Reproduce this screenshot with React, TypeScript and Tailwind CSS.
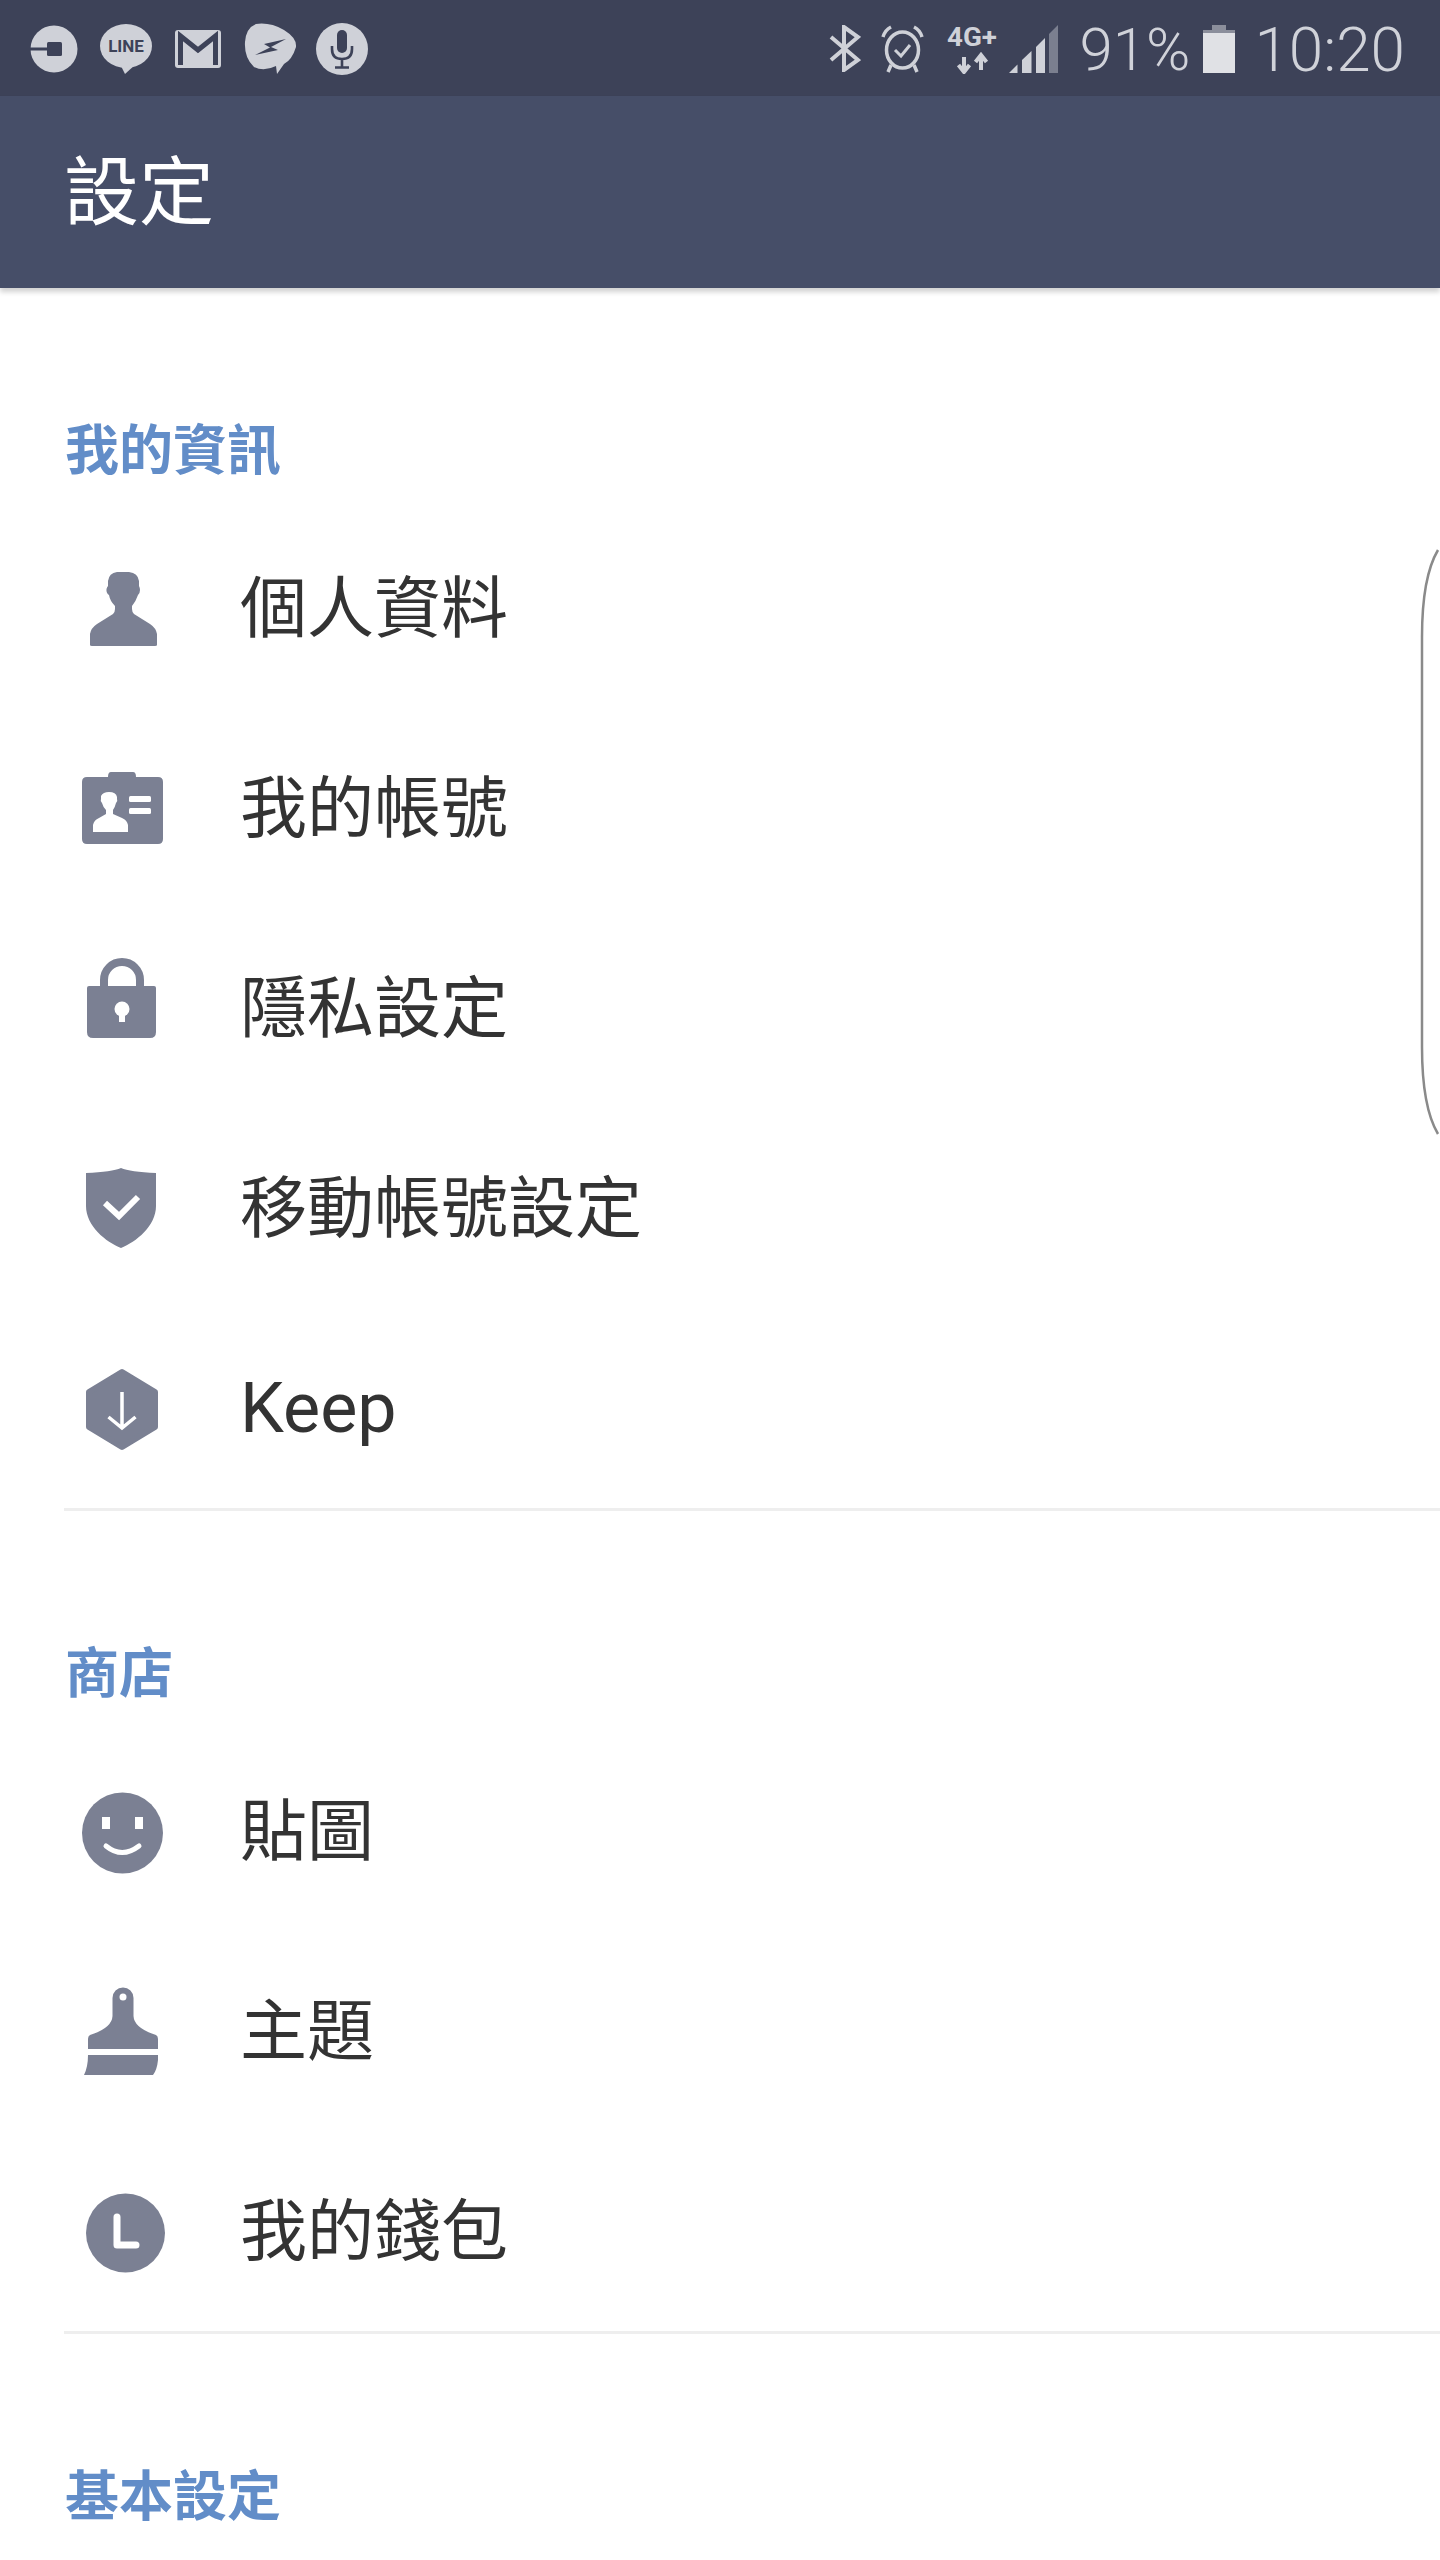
import type { ReactNode } from 'react';

const ICON = '#7b8093';
const LIGHT = '#cfd1d8';
const DARK = '#3d4258';

function RowIcon({ children }: { children: ReactNode }) {
  return (
    <svg width="120" height="120" viewBox="0 0 120 120" fill={ICON} className="shrink-0">
      {children}
    </svg>
  );
}

const PersonIcon = () => (
  <RowIcon>
    <path d="M26 95 V86 Q27 80 33 76 L49 66 Q51 64 51 61 V58 Q46 53 45 47 Q42 45 42.5 41 Q43 39 44 38 V33 Q45 25 53 24 H65 Q74 25 75 33 V38 Q76 40 76 42 Q76 45 74 47 Q72 53 68 58 V61 Q68 64 70 66 L86 76 Q92 80 93 86 V97 Q93 98 91 98 H28 Q26 98 26 97 Z" />
  </RowIcon>
);

const CardIcon = () => (
  <RowIcon>
    <path d="M47 24 H69 Q72 24 72 29 H94 Q99 29 99 34 V91 Q99 96 94 96 H23 Q18 96 18 91 V34 Q18 29 23 29 H44 Q44 24 47 24 Z" />
    <path
      fill="#fff"
      d="M29 84 V77 Q30 72 35 70 L42 66 V62 Q39 59 38 55 Q36 53 37 51 V48 Q39 44 45 44 Q52 44 53 49 V51 Q54 53 52 55 Q51 59 49 62 V66 L58 70 Q63 72 64 77 V84 Z"
    />
    <rect x="65" y="48" width="22" height="6" rx="1.5" fill="#fff" />
    <rect x="65" y="60" width="22" height="6" rx="1.5" fill="#fff" />
  </RowIcon>
);

const LockIcon = () => (
  <RowIcon>
    <path d="M40 41 V32 A18 18 0 0 1 76 32 V41" fill="none" stroke={ICON} strokeWidth="8" />
    <path d="M23 40 Q23 38 25 38 H90 Q92 38 92 40 V84 Q92 90 86 90 H29 Q23 90 23 84 Z" />
    <circle cx="58" cy="61" r="7.5" fill="#fff" />
    <rect x="55" y="63" width="6" height="11" fill="#fff" />
  </RowIcon>
);

const ShieldIcon = () => (
  <RowIcon>
    <path d="M57 20 Q66 24 92 25 V58 C92 78 72 94 57 100 C42 94 22 78 22 58 V25 Q48 24 57 20 Z" />
    <path d="M41 55 L55 68 L74 49" fill="none" stroke="#fff" strokeWidth="6" />
  </RowIcon>
);

const KeepIcon = () => (
  <RowIcon>
    <path d="M58 24 L91 44 V79 L58 99 L25 79 V44 Z" stroke={ICON} strokeWidth="6" strokeLinejoin="round" />
    <path d="M58 44 V80 M44.5 69 L58 80 L71.5 69" fill="none" stroke="#fff" strokeWidth="3.5" />
  </RowIcon>
);

const SmileIcon = () => (
  <RowIcon>
    <circle cx="58.5" cy="62" r="40.5" />
    <rect x="38" y="46" width="8" height="12" fill="#fff" />
    <rect x="71" y="46" width="8" height="12" fill="#fff" />
    <path d="M42 75 Q58 88 75 75" fill="none" stroke="#fff" strokeWidth="5" strokeLinecap="round" />
  </RowIcon>
);

const BrushIcon = () => (
  <RowIcon>
    <path d="M48.5 27 A10.5 10.5 0 0 1 69.5 27 V45 Q70 57 92 64 Q94 65 94 68 V78 H24 V68 Q24 65 26 64 Q48 57 48.5 45 Z" />
    <circle cx="59" cy="26" r="3.5" fill="#fff" />
    <path d="M24 84 H94 V89 Q93 99 89 104 H20 Q24 96 24 84 Z" />
  </RowIcon>
);

const WalletIcon = () => (
  <RowIcon>
    <circle cx="61.5" cy="62" r="39.5" />
    <path d="M53 46 V74 H72" fill="none" stroke="#fff" strokeWidth="7" strokeLinecap="round" strokeLinejoin="round" />
  </RowIcon>
);

function NotifyIcon({ children }: { children: ReactNode }) {
  return (
    <svg width="72" height="96" viewBox="0 0 72 96" fill={LIGHT} className="shrink-0">
      {children}
    </svg>
  );
}

function StatusLeft() {
  return (
    <div className="flex pl-[18px]">
      <NotifyIcon>
        <circle cx="36" cy="49" r="23.5" />
        <rect x="29" y="42" width="15" height="14" rx="1.5" fill={DARK} />
        <rect x="12" y="47.5" width="18" height="3" fill={DARK} />
      </NotifyIcon>
      <NotifyIcon>
        <ellipse cx="36" cy="46" rx="26" ry="22" />
        <path d="M30 64 L35 74 L46 64 Z" />
        <text
          x="36"
          y="52"
          textAnchor="middle"
          fontSize="17"
          fontWeight="700"
          fontFamily="Roboto, sans-serif"
          fill={DARK}
        >
          LINE
        </text>
      </NotifyIcon>
      <NotifyIcon>
        <rect x="13" y="30" width="46" height="38" rx="3" />
        <path d="M18.5 65 V36 L36 50 L53.5 36 V65" fill="none" stroke={DARK} strokeWidth="5" strokeLinejoin="miter" />
      </NotifyIcon>
      <NotifyIcon>
        <path d="M22 24 Q36 22 50 30 Q63 38 62 47 Q58 60 50 64 L43 74 L42 66 Q30 72 20 67 Q10 58 11 42 Q12 28 22 24 Z" />
        <path d="M52 39 L30 44 L36 47.5 L21 55 L44 50 L37 47 Z" fill={DARK} />
      </NotifyIcon>
      <NotifyIcon>
        <circle cx="36" cy="49" r="26" />
        <rect x="31" y="30" width="10" height="23" rx="5" fill={DARK} />
        <path d="M26 46 V49 Q26 59 36 59 Q46 59 46 49 V46 M36 59 V67 M29 67.5 H43" fill="none" stroke={DARK} strokeWidth="2.6" />
      </NotifyIcon>
    </div>
  );
}

function StatusRight() {
  return (
    <div className="ml-auto flex items-start pr-[35px] text-[#d0d2d9] font-['Roboto',sans-serif]">
      <svg width="32" height="47" viewBox="0 0 32 47" className="mt-[25px] shrink-0">
        <path d="M2 12 L29 35 L15 45 V2 L29 12 L2 35" fill="none" stroke={LIGHT} strokeWidth="4" />
      </svg>
      <svg width="43" height="48" viewBox="0 0 43 48" className="ml-[20px] mt-[25px] shrink-0">
        <ellipse cx="21.5" cy="25" rx="16" ry="18" fill="none" stroke={LIGHT} strokeWidth="3.5" />
        <path d="M14 25 L20 31 L29 20" fill="none" stroke={LIGHT} strokeWidth="3" />
        <path d="M2 12 Q4 5 10 2 M41 12 Q39 5 33 2 M10 40 L7 47 M33 40 L36 47" fill="none" stroke={LIGHT} strokeWidth="3.5" />
      </svg>
      <svg width="52" height="56" viewBox="0 0 52 56" className="ml-[23px] mt-[18px] shrink-0">
        <text
          x="0"
          y="28"
          fontSize="25"
          fontWeight="700"
          fontFamily="Roboto, sans-serif"
          fill={LIGHT}
          textLength={50}
          lengthAdjust="spacingAndGlyphs"
        >
          4G+
        </text>
        <path d="M17 39 V52 M11.5 47 L17 54 L22.5 47 M34 52 V39 M28.5 44 L34 37 L39.5 44" fill="none" stroke={LIGHT} strokeWidth="4" />
      </svg>
      <svg width="49" height="48" viewBox="0 0 49 48" className="ml-[10px] mt-[25px] shrink-0">
        <path d="M0 48 L8.5 39.5 V48 Z" fill={LIGHT} />
        <path d="M13 35 L22.5 26 V48 H13 Z" fill={LIGHT} />
        <path d="M27 22 L36 13 V48 H27 Z" fill={LIGHT} />
        <path d="M40 9 L49 0 V48 H40 Z" fill="#7b7f8f" />
      </svg>
      <span className="ml-[21px] mt-[17px] text-[60px] leading-[66px] font-[350]">91%</span>
      <div className="ml-[13px] mt-[25px] flex w-[32px] shrink-0 flex-col items-center">
        <div className="h-[5px] w-[14px] bg-[#8b8e9b]" />
        <div className="h-[3px] w-full bg-[#8b8e9b]" />
        <div className="h-[40px] w-full bg-[#e0e1e5]" />
      </div>
      <span className="ml-[19px] mt-[17px] text-[62px] leading-[66px] font-[350]">10:20</span>
    </div>
  );
}

function SectionLabel({ children }: { children: ReactNode }) {
  return (
    <div className="pb-[6px] pl-[65px] pt-[114px] text-[54px] font-bold leading-[100px] text-[#628dc8]">
      {children}
    </div>
  );
}

function Row({ icon, label, latin }: { icon: ReactNode; label: string; latin?: boolean }) {
  return (
    <div className="flex h-[200px] items-center pl-[64px]">
      {icon}
      <span className={latin ? 'ml-[56px] text-[70px] text-[#333333]' : 'ml-[56px] pt-[3px] text-[67px] text-[#333333]'}>
        {label}
      </span>
    </div>
  );
}

const Divider = () => <div className="ml-[64px] h-[3px] bg-[#eeeeee]" />;

export default function App() {
  return (
    <div className="relative h-[2560px] w-[1440px] overflow-hidden bg-white font-['Roboto','Noto_Sans_CJK_TC',sans-serif]">
      <div className="flex h-[96px] bg-[#3d4258]">
        <StatusLeft />
        <StatusRight />
      </div>
      <div className="flex h-[192px] items-center bg-[#464e68] pl-[64px] pt-[3px] text-[75px] text-white shadow-[0_4px_5px_rgba(0,0,0,0.18)]">
        設定
      </div>

      <SectionLabel>我的資訊</SectionLabel>
      <Row icon={<PersonIcon />} label="個人資料" />
      <Row icon={<CardIcon />} label="我的帳號" />
      <Row icon={<LockIcon />} label="隱私設定" />
      <Row icon={<ShieldIcon />} label="移動帳號設定" />
      <Row icon={<KeepIcon />} label="Keep" latin />
      <Divider />

      <SectionLabel>商店</SectionLabel>
      <Row icon={<SmileIcon />} label="貼圖" />
      <Row icon={<BrushIcon />} label="主題" />
      <Row icon={<WalletIcon />} label="我的錢包" />
      <Divider />

      <SectionLabel>基本設定</SectionLabel>

      {/* curved edge handle on the right */}
      <svg width="20" height="590" viewBox="0 0 20 590" className="absolute right-0 top-[547px]">
        <path d="M18 3 Q2 30 2 90 V500 Q2 560 18 587" fill="none" stroke="#8a8a8a" strokeWidth="2.5" />
      </svg>
    </div>
  );
}
